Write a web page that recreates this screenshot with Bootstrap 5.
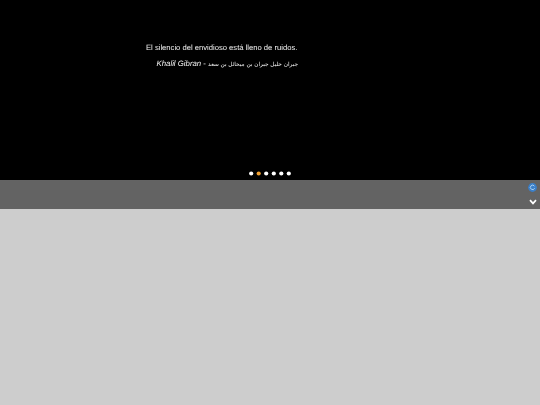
<!DOCTYPE html>
<html lang="es">
<head>
<meta charset="utf-8">
<title>Khalil Gibran</title>
<link href="https://cdn.jsdelivr.net/npm/bootstrap@5.3.0/dist/css/bootstrap.min.css" rel="stylesheet">
<style>
html,body{height:100%;}
body{background:#cdcdcd;font-family:"Liberation Sans",Arial,"DejaVu Sans",sans-serif;overflow:hidden;}
.stage{height:180px;background:#000;color:#fff;}
.quote-box{width:152px;margin-left:146px;padding-top:42px;will-change:transform;text-rendering:geometricPrecision;}
.quote-text{font-size:7.64px;line-height:11px;white-space:nowrap;color:#f2f2f2;}
.quote-author{font-size:7.8px;line-height:11px;margin-top:5px;white-space:nowrap;color:#f2f2f2;}
.ar{font-family:"DejaVu Sans",sans-serif;font-size:5.75px;font-style:normal;}
.dots{bottom:3px;left:247px;display:block;}
.toolbar{height:29px;background:#636363;}
.tool-stack{width:15px;padding:3px 0 4px;}
.globe-icon{margin-right:1px;}
</style>
</head>
<body>
<div class="stage position-relative">
  <div class="quote-box">
    <p class="quote-text mb-0">El silencio del envidioso está lleno de ruidos.</p>
    <p class="quote-author mb-0 text-end"><em>Khalil Gibran</em> - <span class="ar" dir="rtl">جبران خليل جبران بن ميخائل بن سعد</span></p>
  </div>
  <svg class="dots position-absolute" width="46" height="7" viewBox="0 0 46 7">
    <g fill="#fff"><circle cx="4.2" cy="3.5" r="2.1"/><circle cx="19.2" cy="3.5" r="2.1"/><circle cx="26.8" cy="3.5" r="2.1"/><circle cx="34.3" cy="3.5" r="2.1"/><circle cx="41.8" cy="3.5" r="2.1"/></g>
    <circle cx="11.7" cy="3.5" r="2.1" fill="#f0a030"/>
  </svg>
</div>
<div class="toolbar d-flex justify-content-end">
  <div class="tool-stack d-flex flex-column align-items-center justify-content-between">
    <svg class="globe-icon" width="9" height="9" viewBox="0 0 9 9"><circle cx="4.5" cy="4.5" r="4.4" fill="#3b7fc8"/><path d="M6.4 3.2A2.2 2.2 0 1 0 6.6 5.2" fill="none" stroke="#a9d0f2" stroke-width="1"/></svg>
    <svg width="8" height="6" viewBox="0 0 8 6"><path d="M1 1.2 4 4.4 7 1.2" fill="none" stroke="#fff" stroke-width="1.7"/></svg>
  </div>
</div>
</body>
</html>
